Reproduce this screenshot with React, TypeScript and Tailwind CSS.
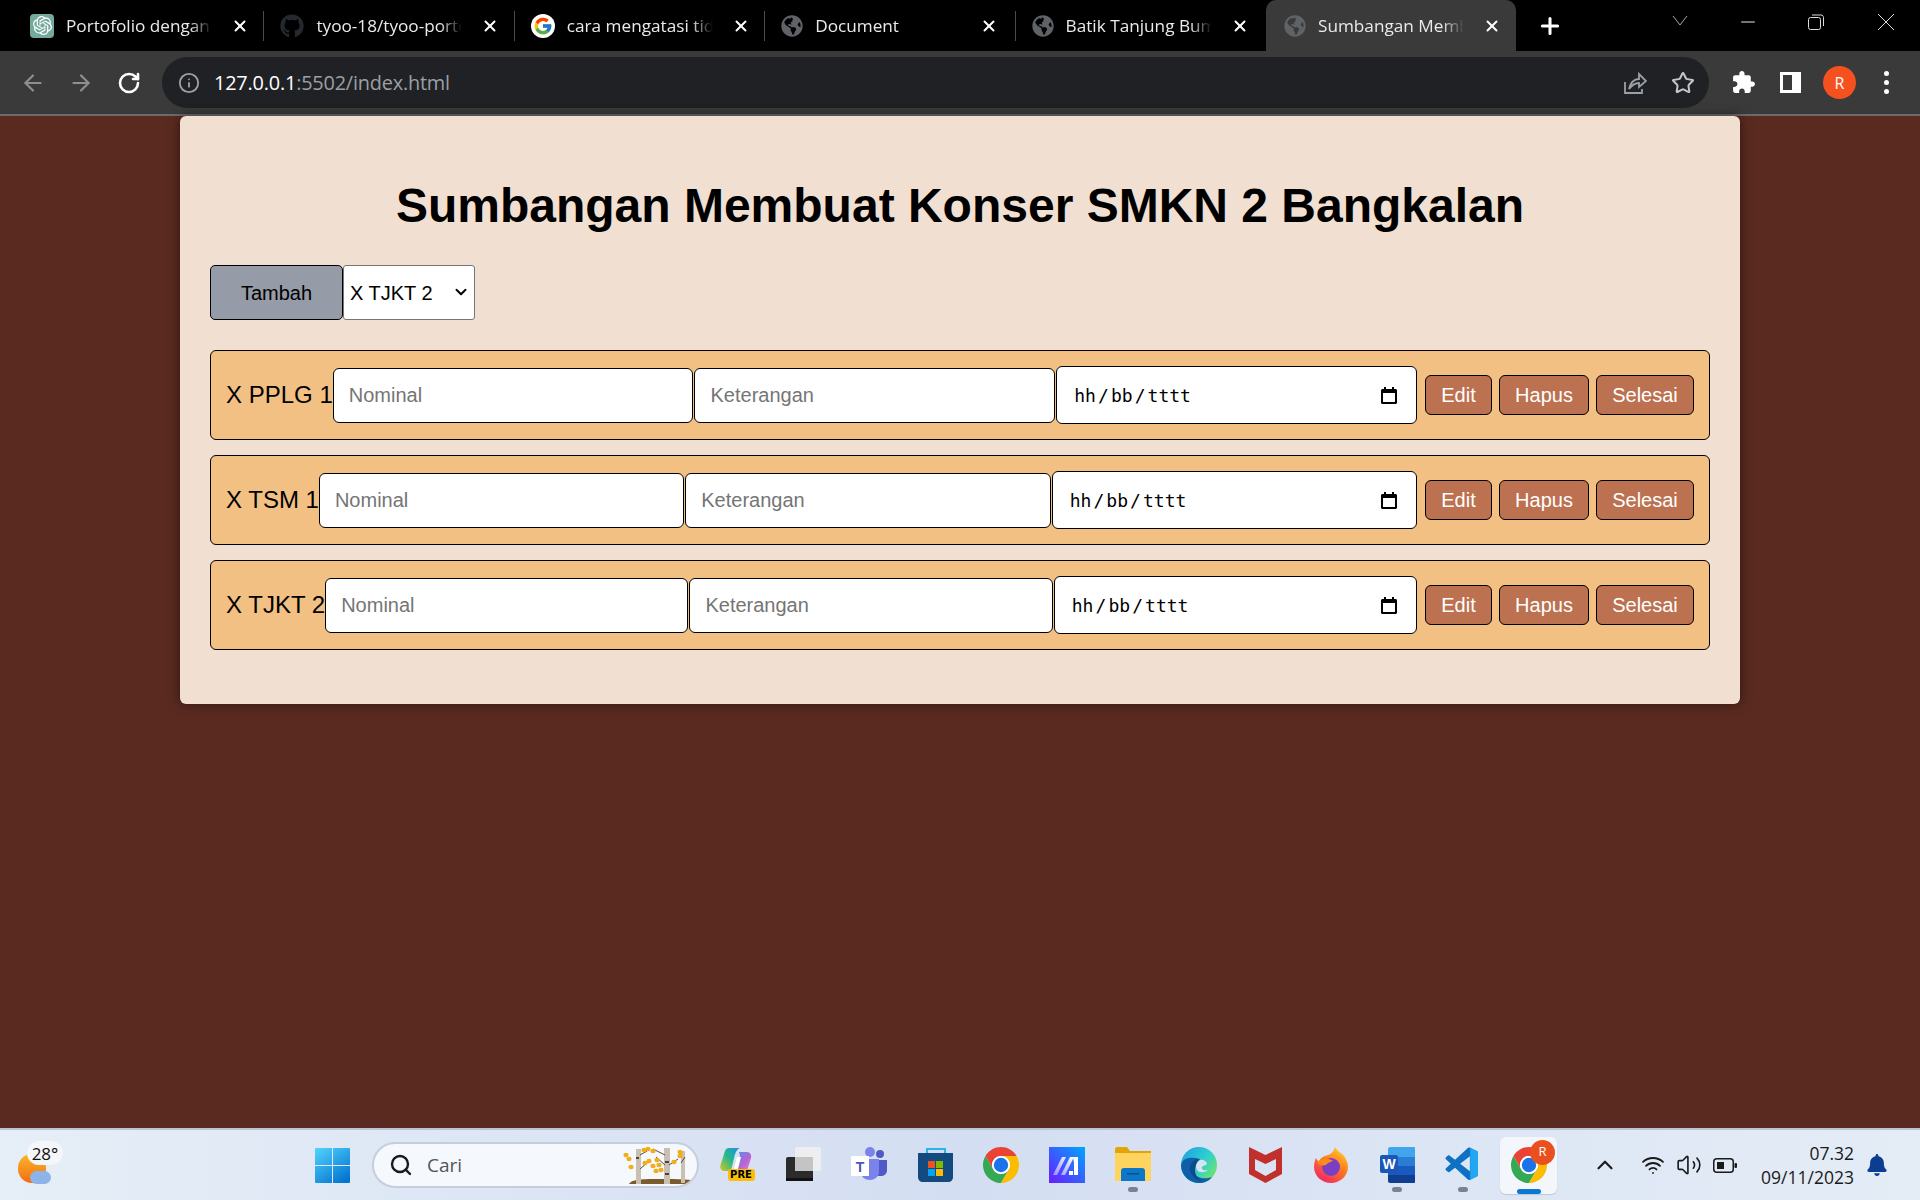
import React from "react";
import { ArrowLeft, ArrowRight, ChevronDown, ChevronUp, Info, Minus, Plus, RotateCw, Search, Star, Volume2, Wifi, X } from "lucide-react";
import { FaGithub, FaGlobeAmericas, FaBell } from "react-icons/fa";
import { FcGoogle } from "react-icons/fc";
import { SiOpenai } from "react-icons/si";
import { VscVscode } from "react-icons/vsc";

const tabs = [
  { title: "Portofolio dengan", icon: "openai" },
  { title: "tyoo-18/tyoo-portofolio", icon: "github" },
  { title: "cara mengatasi tidak", icon: "google" },
  { title: "Document", icon: "globe" },
  { title: "Batik Tanjung Bumi", icon: "globe" },
  { title: "Sumbangan Membuat", icon: "globe", active: true },
];

const rows = ["X PPLG 1", "X TSM 1", "X TJKT 2"];

const TabIcon = ({ icon }: { icon: string }) => {
  if (icon === "openai")
    return (
      <div className="w-6 h-6 rounded-[4px] bg-[#74aa9c] flex items-center justify-center shrink-0">
        <SiOpenai className="text-white" size={19} />
      </div>
    );
  if (icon === "github") return <FaGithub className="text-[#24292f] shrink-0" size={24} />;
  if (icon === "google")
    return (
      <div className="w-6 h-6 rounded-full bg-white flex items-center justify-center shrink-0">
        <FcGoogle size={20} />
      </div>
    );
  return <FaGlobeAmericas className="text-[#5f6368] shrink-0" size={22} />;
};

const ChromeLogo = ({ size = 36 }: { size?: number }) => (
  <svg width={size} height={size} viewBox="2 2 44 44">
    <path fill="#ea4335" d="M4.95 13A22 22 0 0 1 43.05 13L24 13A11 11 0 0 0 14.47 29.5Z" />
    <path fill="#34a853" d="M4.95 13A22 22 0 0 0 24 46L33.53 29.5A11 11 0 0 1 14.47 29.5Z" />
    <path fill="#fbbc04" d="M43.05 13A22 22 0 0 1 24 46L33.53 29.5A11 11 0 0 0 24 13Z" />
    <circle cx="24" cy="24" r="11" fill="#fff" />
    <circle cx="24" cy="24" r="8.8" fill="#1a73e8" />
  </svg>
);

const WindowsLogo = () => (
  <svg width="35" height="35" viewBox="0 0 35 35">
    <defs>
      <linearGradient id="win" x1="0.1" y1="0" x2="0.8" y2="1">
        <stop offset="0" stopColor="#4fd0fb" />
        <stop offset="1" stopColor="#0474d0" />
      </linearGradient>
    </defs>
    <path
      fill="url(#win)"
      d="M1 0H17V17H0V1A1 1 0 0 1 1 0ZM18 0H34A1 1 0 0 1 35 1V17H18ZM0 18H17V35H1A1 1 0 0 1 0 34ZM18 18H35V34A1 1 0 0 1 34 35H18Z"
    />
  </svg>
);

const Copilot = () => (
  <div className="relative w-[35px] h-[34px]">
    <svg width="32" height="28" viewBox="0 0 32 28" className="absolute left-0 top-0">
      <defs>
        <linearGradient id="cp1" x1="0" y1="1" x2="1" y2="0">
          <stop offset="0" stopColor="#d8c521" />
          <stop offset="0.5" stopColor="#25b98a" />
          <stop offset="1" stopColor="#1b8fe8" />
        </linearGradient>
        <linearGradient id="cp2" x1="0" y1="0" x2="1" y2="1">
          <stop offset="0" stopColor="#3b9ce8" />
          <stop offset="0.55" stopColor="#b564d8" />
          <stop offset="1" stopColor="#f08ab0" />
        </linearGradient>
      </defs>
      <path fill="url(#cp1)" d="M9 1H20C17 2 15.5 5 14.5 9L11 24H4C1 24-.5 21 .5 18L5 4C5.6 2 7 1 9 1Z" />
      <path fill="url(#cp2)" d="M19 5H27C30 5 32 8 31 11L27 24C26.4 26 25 27 23 27H12C15 26 16.5 23 17.5 19L20 9Z" />
      <path fill="#fff" d="M17 10H21L18 22H14Z" />
    </svg>
    <div className="absolute left-[8px] bottom-0 w-[27px] h-[12px] rounded-[3px] bg-[#fbbf0a] flex items-center justify-center text-[10px] leading-none font-bold text-black [font-family:'DejaVu_Sans',sans-serif]">
      PRE
    </div>
  </div>
);

const TaskView = () => (
  <svg width="35" height="34" viewBox="0 0 35 34">
    <rect x="0" y="10" width="27" height="24" rx="2" fill="#2b2b2b" />
    <rect x="0" y="31" width="27" height="3" fill="#111" />
    <rect x="9" y="0" width="26" height="24" rx="1.5" fill="#efefef" opacity="0.92" />
    <rect x="9" y="10" width="18" height="14" fill="#c4c4c4" />
  </svg>
);

const Teams = () => (
  <svg width="36" height="33" viewBox="0 0 36 33">
    <circle cx="29" cy="7" r="4" fill="#5059c9" />
    <path fill="#5059c9" d="M23 13H36V23C36 27 33 29 30 29H23Z" />
    <circle cx="19" cy="5" r="5" fill="#7b83eb" />
    <path fill="#7b83eb" d="M10 12H28V25C28 30 23 33 19 33C14 33 10 30 10 25Z" />
    <rect x="0" y="9" width="18" height="20" fill="#fff" />
    <text x="9" y="25" textAnchor="middle" fontSize="14" fontWeight="700" fill="#4b53bc" fontFamily="'Liberation Sans', sans-serif">T</text>
  </svg>
);

const Store = () => (
  <svg width="35" height="35" viewBox="0 0 35 35">
    <path fill="none" stroke="#2bb5e6" strokeWidth="2" d="M9 7V2H27V7" />
    <path fill="#134a80" d="M0 6H35V30C35 33 33 35 30 35H5C2 35 0 33 0 30Z" />
    <rect x="10" y="14" width="7" height="7" fill="#f25022" />
    <rect x="18" y="14" width="7" height="7" fill="#7fba00" />
    <rect x="10" y="22" width="7" height="7" fill="#00a4ef" />
    <rect x="18" y="22" width="7" height="7" fill="#ffb900" />
  </svg>
);

const MaIcon = () => (
  <svg width="36" height="36" viewBox="0 0 36 36">
    <defs>
      <linearGradient id="ma" x1="0" y1="1" x2="1" y2="0">
        <stop offset="0" stopColor="#6a1cff" />
        <stop offset="1" stopColor="#00a6ff" />
      </linearGradient>
      <linearGradient id="mb" x1="0" y1="1" x2="1" y2="0">
        <stop offset="0" stopColor="#9c8cff" />
        <stop offset="1" stopColor="#fff" />
      </linearGradient>
    </defs>
    <rect width="36" height="36" fill="url(#ma)" />
    <path fill="url(#mb)" d="M4 28L13 10H17L8 28ZM12 28L21 10H25L16 28Z" />
    <path fill="#fff" d="M24 10H29V28H25V16ZM20 24H24V28H20Z" />
  </svg>
);

const Folder = () => (
  <svg width="36" height="34" viewBox="0 0 36 34">
    <path fill="#e2a508" d="M0 2C0 1 1 0 2 0H12L15 4H36V10H0Z" />
    <path fill="#fdd45e" d="M0 6H36V34H0Z" />
    <path fill="#0c76c8" d="M6 34V24C6 22 7 21 9 21H27C29 21 30 22 30 24V34Z" />
    <rect x="12" y="26" width="12" height="1.5" fill="#064f91" />
  </svg>
);

const Edge = () => (
  <svg width="36" height="36" viewBox="0 0 36 36">
    <defs>
      <linearGradient id="ed" x1="0" y1="0" x2="1" y2="0.7">
        <stop offset="0" stopColor="#1b9de2" />
        <stop offset="0.6" stopColor="#2fcfcf" />
        <stop offset="1" stopColor="#6ee36d" />
      </linearGradient>
    </defs>
    <circle cx="18" cy="18" r="18" fill="url(#ed)" />
    <path fill="#0f5fa8" d="M0 18C0 28 8 36 18 36C23 36 28 34 31 30C24 33 14 31 12 24C10 18 13 14 19 12C10 9 1 11 0 18Z" />
    <path fill="#0c4a8c" d="M9 20C8 27 14 33 22 35C17 32 14 28 14 23C14 19 16 15 19 12C14 12 10 15 9 20Z" />
    <path fill="#d5e3f2" d="M19 13C15 15 14 20 16 23C18 26 24 26 27 23C24 24 20 23 21 20C22 18 26 19 26 16C24 13 21 12 19 13Z" />
  </svg>
);

const Mcafee = () => (
  <svg width="33" height="36" viewBox="0 0 33 36">
    <path
      fill="#c1302c"
      fillRule="evenodd"
      d="M0 0L16.5 8L33 0V27L16.5 36L0 27ZM6 12V23L16.5 29L27 23V12L16.5 17Z"
    />
  </svg>
);

const Firefox = () => (
  <svg width="34" height="36" viewBox="0 0 34 36">
    <defs>
      <linearGradient id="ff" x1="0.8" y1="0" x2="0.2" y2="1">
        <stop offset="0" stopColor="#ffd12e" />
        <stop offset="0.45" stopColor="#ff7a1e" />
        <stop offset="1" stopColor="#f0206c" />
      </linearGradient>
    </defs>
    <path fill="url(#ff)" d="M21 0C23 4 28 6 30 9C33 13 34 17 34 20C34 29 26 36 17 36C8 36 0 29 0 20C0 16 1 13 2 11C3 13 4 14 5 15C6 11 10 9 14 8C17 7 20 4 21 0Z" />
    <circle cx="17" cy="20" r="9" fill="#7b3fc4" />
    <path fill="#ff8a1e" d="M3 15C8 11 15 11 19 14C16 15 13 16 12 18C8 19 5 18 3 15Z" />
  </svg>
);

const Word = () => (
  <svg width="35" height="36" viewBox="0 0 35 36">
    <path fill="#41a5ee" d="M8 2C8 1 9 0 10 0H34C34.5 0 35 .5 35 1V10H8Z" />
    <rect x="8" y="10" width="27" height="9" fill="#2b7cd3" />
    <rect x="8" y="19" width="27" height="9" fill="#185abd" />
    <path fill="#103f91" d="M8 28H35V35C35 35.5 34.5 36 34 36H10C9 36 8 35 8 34Z" />
    <rect x="0" y="8" width="18" height="18" rx="2" fill="#1b56b8" />
    <text x="9" y="22" textAnchor="middle" fontSize="14" fontWeight="700" fill="#fff" fontFamily="'Liberation Sans', sans-serif">W</text>
  </svg>
);

const VsCode = () => (
  <div className="relative w-9 h-9">
    <VscVscode size={40} className="absolute -left-[2px] -top-[2px] text-[#0d72c4]" />
    <VscVscode size={40} className="absolute -left-[2px] -top-[2px] text-[#22a8f2] [clip-path:inset(0_0_0_68%)]" />
  </div>
);

const Weather = () => (
  <div className="relative w-[50px] h-[48px]">
    <div className="absolute left-[18px] top-[13px] w-[28px] h-[29px] rounded-full bg-gradient-to-b from-[#f8b62a] to-[#f36a12]" />
    <div className="absolute left-[30px] top-[30px] w-[21px] h-[13px] rounded-full bg-[#8cb4e8]" />
    <div className="absolute left-[27px] top-0 w-[36px] h-[24px] rounded-full bg-[#f4f6fa] flex items-center justify-center text-[17px] leading-none text-[#111]">
      28°
    </div>
  </div>
);

const BirchArt = () => (
  <svg width="70" height="40" viewBox="0 0 70 40">
    <path fill="#7a5b2c" d="M6 39C8 35 16 34 35 34C52 34 60 34 68 35L64 39Z" />
    <rect x="13" y="4" width="5" height="35" fill="#c9c0b2" />
    <rect x="41" y="3" width="6" height="36" fill="#c9c0b2" />
    <rect x="58" y="6" width="4" height="32" fill="#c9c0b2" />
    <rect x="13" y="12" width="3" height="2" fill="#444" />
    <rect x="42" y="16" width="4" height="2" fill="#444" />
    <rect x="42" y="28" width="4" height="2" fill="#444" />
    <path stroke="#5c4a32" strokeWidth="1" fill="none" d="M17 24L25 17M17 10L24 6M42 20L33 12M42 10L30 4M46 20L55 14M58 18L62 12" />
    {[
      [3, 10], [6, 14], [21, 5], [25, 4], [22, 18], [26, 16], [30, 6], [34, 15], [30, 21], [36, 20], [33, 26], [38, 25], [57, 7], [57, 11], [51, 17], [8, 22],
    ].map(([cx, cy], i) => (
      <ellipse key={i} cx={cx} cy={cy} rx="2.6" ry="2.2" fill="#f2ad1a" />
    ))}
  </svg>
);

const dockItems = [
  { node: <Copilot /> },
  { node: <TaskView /> },
  { node: <Teams /> },
  { node: <Store /> },
  { node: <ChromeLogo /> },
  { node: <MaIcon /> },
  { node: <Folder />, open: true },
  { node: <Edge /> },
  { node: <Mcafee /> },
  { node: <Firefox /> },
  { node: <Word />, open: true },
  { node: <VsCode />, open: true },
];

export default function App() {
  return (
    <div className="w-[1920px] h-[1200px] flex flex-col overflow-hidden bg-[#5a2a20] text-black [font-family:'Liberation_Sans',Arial,sans-serif]">
      {/* tab strip */}
      <div className="h-[51px] bg-black flex pl-[14px] text-[#e8eaed] [font-family:'Open_Sans',sans-serif] shrink-0">
        {tabs.map((tab, i) => (
          <div
            key={tab.title}
            className={
              tab.active
                ? "w-[250.4px] h-[51px] bg-[#3a3a3a] rounded-t-[10px] flex items-center pl-[18px] relative"
                : "w-[250.4px] h-[51px] flex items-center pl-[16px] relative"
            }
          >
            <TabIcon icon={tab.icon} />
            <div className="ml-[12px] w-[146px] overflow-hidden whitespace-nowrap text-[17.2px] [mask-image:linear-gradient(to_right,black_85%,transparent)]">
              {tab.title}
            </div>
            <X className="ml-[19px] text-white" size={18} strokeWidth={2.6} />
            {i < 4 && <div className="absolute right-0 top-[11px] w-px h-[30px] bg-[#4a4a4a]" />}
          </div>
        ))}
        <Plus className="ml-[21px] mt-[13px] text-white" size={26} strokeWidth={2.8} />
        <div className="ml-[107px] mt-[15px] w-[20px] flex justify-center">
          <svg width="16" height="12" viewBox="0 0 16 12"><path d="M1 1L8 10L15 1" stroke="#aaa" fill="none" /></svg>
        </div>
        <Minus className="ml-[47px] mt-[11px] text-white" size={22} strokeWidth={1} />
        <svg width="16" height="16" viewBox="0 0 16 16" className="ml-[49px] mt-[14px]">
          <rect x="0.5" y="3.5" width="12" height="12" rx="2" fill="none" stroke="#ddd" />
          <path d="M4 1H13C14.5 1 15.5 2 15.5 3.5V12" fill="none" stroke="#ddd" />
        </svg>
        <svg width="16" height="18" viewBox="0 0 16 18" className="ml-[54px] mt-[13px]">
          <path d="M0 1L16 17M16 1L0 17" stroke="#ddd" />
        </svg>
      </div>

      {/* toolbar */}
      <div className="h-[63px] bg-[#3a3a3a] flex items-center shrink-0 [font-family:'Open_Sans',sans-serif]">
        <ArrowLeft className="ml-[20px] text-[#8f8f8f]" size={26} strokeWidth={2} />
        <ArrowRight className="ml-[22px] text-[#8f8f8f]" size={26} strokeWidth={2} />
        <RotateCw className="ml-[23px] text-white" size={24} strokeWidth={2.6} />
        <div className="ml-[21px] w-[1547px] h-[51px] rounded-full bg-[#202124] flex items-center">
          <Info className="ml-[16px] text-[#a0a0a0]" size={22} strokeWidth={2} />
          <div className="ml-[14px] text-[19.9px] tracking-[-0.2px] text-white">
            127.0.0.1<span className="text-[#9aa0a6]">:5502/index.html</span>
          </div>
          <svg width="24" height="24" viewBox="0 0 24 24" className="ml-auto" fill="none" stroke="#9aa0a6" strokeWidth="1.8">
            <path d="M2 11V22H19V18" />
            <path d="M6 18C7 12 11 8 16 8V3L23 10L16 16V12C12 12 9 14 6 18Z" />
          </svg>
          <Star className="ml-[24px] mr-[14px] text-[#c4c7c5]" size={24} strokeWidth={2} />
        </div>
        <svg width="25" height="25" viewBox="0 0 24 24" fill="#fff" className="ml-[22px]">
          <path d="M20.5 11H19V7c0-1.1-.9-2-2-2h-4V3.5C13 2.12 11.88 1 10.5 1S8 2.12 8 3.5V5H4c-1.1 0-1.99.9-1.99 2v3.8H3.5c1.49 0 2.7 1.21 2.7 2.7s-1.21 2.7-2.7 2.7H2V20c0 1.1.9 2 2 2h3.8v-1.5c0-1.49 1.21-2.7 2.7-2.7 1.49 0 2.7 1.21 2.7 2.7V22H17c1.1 0 2-.9 2-2v-4h1.5c1.38 0 2.5-1.12 2.5-2.5S21.88 11 20.5 11z" />
        </svg>
        <div className="ml-[24px] w-[21px] h-[21px] bg-white p-[3px] pr-[9px] flex">
          <div className="flex-1 bg-[#3a3a3a]" />
        </div>
        <div className="ml-[22px] w-[33px] h-[33px] rounded-full bg-[#f4511e] flex items-center justify-center text-white text-[16px]">
          R
        </div>
        <div className="ml-[28px] flex flex-col gap-[4px]">
          <div className="w-[5px] h-[5px] rounded-full bg-white" />
          <div className="w-[5px] h-[5px] rounded-full bg-white" />
          <div className="w-[5px] h-[5px] rounded-full bg-white" />
        </div>
      </div>
      <div className="h-[2px] bg-[#6b6b6b] shrink-0" />

      {/* page */}
      <div className="flex-1 min-h-0">
        <div className="mx-[180px] h-[588px] bg-[#f1dfd1] rounded-[6px] shadow-[0_0_12px_rgba(0,0,0,0.5)] px-[30px] pt-[62px]">
          <h1 className="text-[48px] leading-[55px] font-bold text-center mb-[32px]">
            Sumbangan Membuat Konser SMKN 2 Bangkalan
          </h1>
          <div className="flex h-[55px] mb-[30px]">
            <button className="w-[133px] bg-[#959ba7] border border-black rounded-[5px] text-[20px]">Tambah</button>
            <div className="relative w-[132px]">
              <select className="appearance-none w-full h-full bg-white border border-[#767676] rounded-[3px] text-[20px] pl-[6px]" defaultValue="X TJKT 2">
                {rows.map((r) => (
                  <option key={r}>{r}</option>
                ))}
              </select>
              <ChevronDown className="absolute right-[5px] top-[18px] pointer-events-none text-black" size={18} strokeWidth={2.6} />
            </div>
          </div>
          <div className="flex flex-col gap-[15px]">
            {rows.map((r) => (
              <div key={r} className="h-[90px] bg-[#f2c083] border border-black rounded-[6px] pl-[15px] pr-[15px] flex items-center text-[24px]">
                <div className="whitespace-nowrap">{r}</div>
                <input placeholder="Nominal" className="flex-1 w-0 min-w-0 h-[55px] bg-white border border-black rounded-[6px] px-[15px] text-[20px] placeholder:text-[#757575]" />
                <input placeholder="Keterangan" className="flex-1 w-0 min-w-0 h-[55px] ml-px bg-white border border-black rounded-[6px] px-[15px] text-[20px] placeholder:text-[#757575]" />
                <div className="flex-1 w-0 min-w-0 h-[58px] ml-px bg-white border border-black rounded-[6px] px-[15px] flex items-center text-[18px] [font-family:'DejaVu_Sans_Mono',monospace]">
                  <span className="ml-[2px]">hh</span>
                  <span className="w-[15px] text-center">/</span>
                  <span>bb</span>
                  <span className="w-[15px] text-center">/</span>
                  <span>tttt</span>
                  <svg width="16" height="17" viewBox="0 0 16 17" className="ml-auto mr-[4px]">
                    <path d="M3 0H5V2H11V0H13V2H14.5C15.3 2 16 2.7 16 3.5V15.5C16 16.3 15.3 17 14.5 17H1.5C.7 17 0 16.3 0 15.5V3.5C0 2.7.7 2 1.5 2H3ZM2 6V15H14V6Z" />
                  </svg>
                </div>
                <button className="ml-[8px] w-[67px] h-[40px] bg-[#bc7150] border border-black rounded-[6px] text-white text-[20px]">Edit</button>
                <button className="ml-[7px] w-[90px] h-[40px] bg-[#bc7150] border border-black rounded-[6px] text-white text-[20px]">Hapus</button>
                <button className="ml-[7px] w-[98px] h-[40px] bg-[#bc7150] border border-black rounded-[6px] text-white text-[20px]">Selesai</button>
              </div>
            ))}
          </div>
        </div>
      </div>

      {/* taskbar */}
      <div className="h-[72px] shrink-0 border-t-2 border-[#bcc3d2] bg-gradient-to-r from-[#e6eef7] via-[#d4def2] to-[#e4edf6] flex items-center [font-family:'Open_Sans',sans-serif] text-[#1a1a1a]">
        <div className="w-[315px] shrink-0">
          <Weather />
        </div>
        <WindowsLogo />
        <div className="ml-[22px] w-[327px] h-[46px] rounded-full bg-[#f5f8fd] border-2 border-[#c6cddd] flex items-center overflow-hidden">
          <Search className="ml-[15px] text-[#1a1a1a]" size={24} strokeWidth={2.4} />
          <span className="ml-[14px] text-[19px] text-[#555]">Cari</span>
          <div className="ml-auto mr-[4px]">
            <BirchArt />
          </div>
        </div>
        <div className="ml-[5px] flex">
          {dockItems.map((item, i) => (
            <div key={i} className="w-[66px] h-[36px] flex justify-center relative">
              {item.node}
              {item.open && <div className="absolute top-[40px] w-[10px] h-[5px] rounded-full bg-[#7b8291]" />}
            </div>
          ))}
        </div>
        <div className="relative ml-[4px] w-[57px] h-[57px] rounded-[6px] bg-[#f3f6fb] shadow-[0_1px_1px_rgba(0,0,0,0.15)] flex items-center justify-center">
          <ChromeLogo />
          <div className="absolute right-[2px] top-[3px] w-[25px] h-[25px] rounded-full bg-[#ea4f1e] flex items-center justify-center text-white text-[13px]">
            R
          </div>
          <div className="absolute bottom-0 w-[24px] h-[5px] rounded-full bg-[#0a78d4]" />
        </div>
        <ChevronUp className="ml-[35px] text-[#1a1a1a]" size={26} strokeWidth={2} />
        <Wifi className="ml-[23px] text-[#1a1a1a]" size={24} strokeWidth={1.8} />
        <Volume2 className="ml-[11px] text-[#1a1a1a]" size={26} strokeWidth={1.5} />
        <svg width="24" height="15" viewBox="0 0 24 15" className="ml-[11px]" fill="none">
          <rect x="0.75" y="0.75" width="19.5" height="13.5" rx="3" stroke="#1a1a1a" strokeWidth="1.5" />
          <rect x="4" y="4" width="7" height="7" fill="#1a1a1a" />
          <rect x="21.5" y="5" width="2.5" height="5" rx="1" fill="#1a1a1a" />
        </svg>
        <div className="ml-auto flex flex-col items-end text-[17.5px] leading-[24px]">
          <div>07.32</div>
          <div>09/11/2023</div>
        </div>
        <FaBell className="ml-[12px] mr-[32px] text-[#0b3d91]" size={22} />
      </div>
    </div>
  );
}
